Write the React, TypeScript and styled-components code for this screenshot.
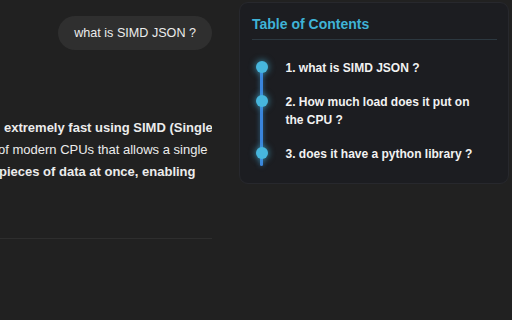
import React from "react";
import styled, { createGlobalStyle } from "styled-components";

const GlobalStyle = createGlobalStyle`
  html, body {
    margin: 0;
    padding: 0;
    background: #212121;
  }
  body {
    font-family: "Liberation Sans", Arial, sans-serif;
    color: #ececec;
    -webkit-font-smoothing: antialiased;
  }
`;

const Page = styled.div`
  display: flex;
  width: 512px;
  height: 320px;
  overflow: hidden;
  background: #212121;
`;

const ChatColumn = styled.div`
  width: 212px;
  flex-shrink: 0;
  display: flex;
  flex-direction: column;
  padding-top: 16px;
  overflow: hidden;
`;

const UserRow = styled.div`
  display: flex;
  justify-content: flex-end;
`;

const Bubble = styled.div`
  height: 34px;
  padding: 0 16px;
  border-radius: 17px;
  background: #2f2f2f;
  color: #ececec;
  font-size: 12.6px;
  display: flex;
  align-items: center;
  white-space: nowrap;
`;

const Answer = styled.div`
  margin-top: 67px;
  font-size: 13px;
  line-height: 22px;
  color: #ececec;
`;

const Line = styled.div<{ $shift: number; $bold?: boolean }>`
  white-space: nowrap;
  margin-left: ${(p) => p.$shift}px;
  font-weight: ${(p) => (p.$bold ? 700 : 400)};
`;

const Separator = styled.hr`
  margin: 55px 0 0;
  border: none;
  height: 1px;
  background: #2e2e2e;
`;

const Panel = styled.aside`
  margin: 2px 0 0 27px;
  width: 270px;
  height: 182px;
  box-sizing: border-box;
  padding: 13px 11px 0 12px;
  background: #1c1d21;
  border: 1px solid #27282d;
  border-radius: 9px;
`;

const Title = styled.h2`
  margin: 0;
  font-size: 14px;
  line-height: 17px;
  font-weight: 700;
  color: #3fb3d6;
`;

const Divider = styled.div`
  margin-top: 6px;
  height: 1px;
  background: #2c3840;
`;

const TocList = styled.ol`
  position: relative;
  list-style: none;
  margin: 19px 0 0;
  padding: 0;
  display: flex;
  flex-direction: column;
  gap: 16px;

  &::before {
    content: "";
    position: absolute;
    left: 8px;
    top: 8px;
    width: 3px;
    height: 99px;
    border-radius: 2px;
    background: #3a84dc;
    box-shadow: 0 0 5px rgba(70, 170, 235, 0.55);
  }
`;

const TocItem = styled.li`
  display: flex;
  align-items: flex-start;
  gap: 12px;
`;

const Dot = styled.span`
  position: relative;
  flex-shrink: 0;
  width: 12px;
  height: 12px;
  margin: 2px 0 0 3.5px;
  border-radius: 50%;
  background: #47b6dd;
  box-shadow: 0 0 6px 1px rgba(71, 182, 221, 0.55);
`;

const ItemText = styled.span`
  margin-left: 6px;
  font-size: 12px;
  line-height: 18px;
  font-weight: 700;
  color: #f2f2f2;
`;

const items = [
  "1. what is SIMD JSON ?",
  <>
    2. How much load does it put on
    <br />
    the CPU ?
  </>,
  "3. does it have a python library ?",
];

export default function App() {
  return (
    <>
      <GlobalStyle />
      <Page>
        <ChatColumn>
          <UserRow>
            <Bubble>what is SIMD JSON ?</Bubble>
          </UserRow>
          <Answer>
            <Line $shift={4} $bold>
              extremely fast using SIMD (Single
            </Line>
            <Line $shift={-2}>of modern CPUs that allows a single</Line>
            <Line $shift={-1} $bold>
              pieces of data at once, enabling
            </Line>
          </Answer>
          <Separator />
        </ChatColumn>
        <Panel>
          <Title>Table of Contents</Title>
          <Divider />
          <TocList>
            {items.map((text, i) => (
              <TocItem key={i}>
                <Dot />
                <ItemText>{text}</ItemText>
              </TocItem>
            ))}
          </TocList>
        </Panel>
      </Page>
    </>
  );
}
